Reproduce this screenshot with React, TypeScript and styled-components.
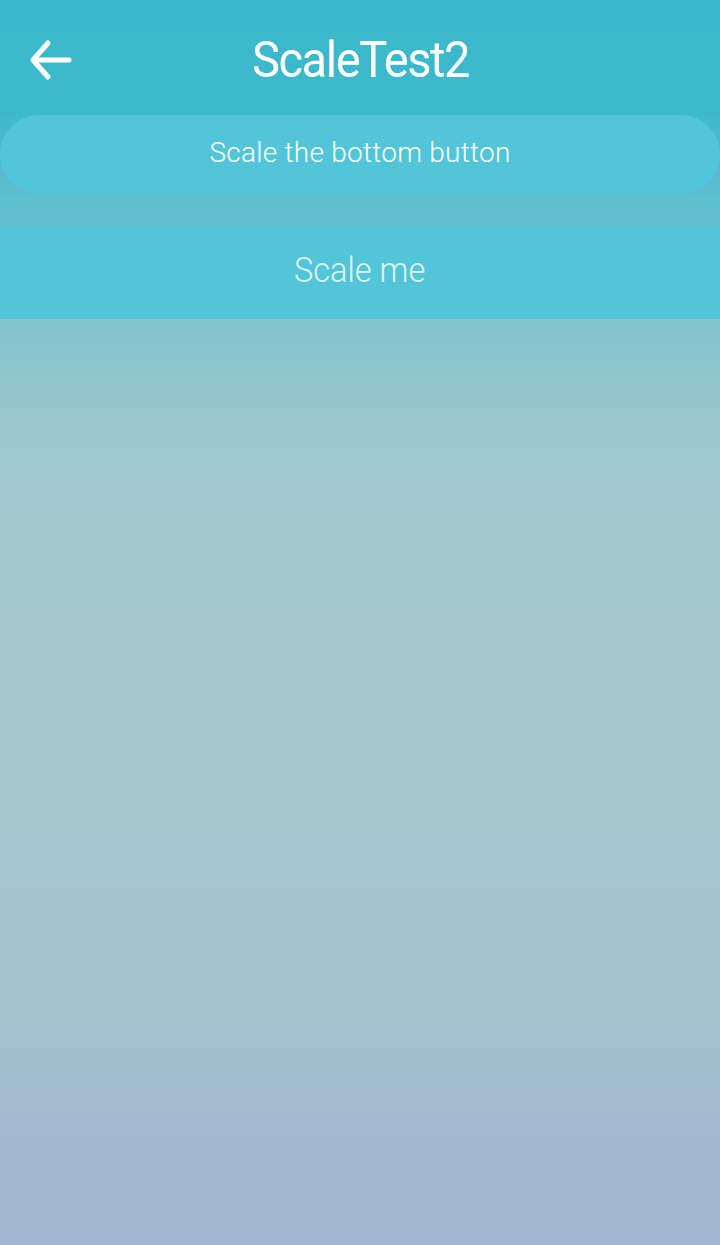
import * as React from "react";
import styled, { createGlobalStyle } from "styled-components";

const GlobalStyle = createGlobalStyle`
  html, body {
    margin: 0;
    padding: 0;
  }
  body {
    font-family: Roboto, "Open Sans", "Liberation Sans", sans-serif;
  }
`;

const Page = styled.div`
  display: flex;
  flex-direction: column;
  min-height: 1245px;
  width: 720px;
  background: linear-gradient(
    to bottom,
    #3cb8cc 0px,
    #3db9cc 112px,
    #5ebfcf 200px,
    #66c0cf 232px,
    #83c3cc 320px,
    #96c7cd 400px,
    #a2c9cf 500px,
    #a5c8ce 700px,
    #a3c3cd 1000px,
    #a3bdce 1090px,
    #a3b8cf 1150px,
    #a4b7d0 1245px
  );
`;

const Header = styled.header`
  display: grid;
  grid-template-columns: 1fr auto 1fr;
  align-items: center;
  height: 115px;
  padding-top: 4px;
  box-sizing: border-box;
`;

const BackButton = styled.button`
  justify-self: start;
  display: flex;
  align-items: center;
  justify-content: center;
  width: 44px;
  height: 44px;
  margin: 0 0 0 28px;
  padding: 0;
  border: none;
  background: transparent;
  cursor: pointer;
`;

const Title = styled.h1`
  margin: 0;
  color: #ffffff;
  font-family: Roboto, "Liberation Sans", sans-serif;
  font-size: 50px;
  font-weight: 400;
  letter-spacing: -1.5px;
  transform: scaleX(0.94);
`;

const Content = styled.main`
  display: flex;
  flex-direction: column;
  gap: 33px;
`;

const Button = styled.button<{ $pill?: boolean; $big?: boolean }>`
  display: flex;
  align-items: center;
  justify-content: center;
  width: 100%;
  height: ${(p) => (p.$big ? "93px" : "78px")};
  margin: 0;
  padding: 0 0 ${(p) => (p.$big ? "5px" : "3px")};
  border: none;
  border-radius: ${(p) => (p.$pill ? "39px" : "0")};
  background: #52c6d8;
  color: ${(p) => (p.$big ? "#e2f4f7" : "#ffffff")};
  font-family: Roboto, "Liberation Sans", sans-serif;
  font-size: ${(p) => (p.$big ? "35px" : "28px")};
  font-weight: 300;
  cursor: pointer;
`;

const Label = styled.span<{ $squeeze?: number; $spacing?: number }>`
  display: inline-block;
  letter-spacing: ${(p) => p.$spacing ?? 0}px;
  transform: scaleX(${(p) => p.$squeeze ?? 1});
`;

const ArrowIcon = () => (
  <svg width="44" height="44" viewBox="0 0 44 44" fill="none">
    <path
      d="M20 5 L5 22 L20 39 M5 22 H41"
      stroke="#ffffff"
      strokeWidth="5"
      strokeLinecap="round"
      strokeLinejoin="round"
    />
  </svg>
);

export default function App() {
  return (
    <Page>
      <GlobalStyle />
      <Header>
        <BackButton aria-label="Back">
          <ArrowIcon />
        </BackButton>
        <Title>ScaleTest2</Title>
        <div />
      </Header>
      <Content>
        <Button $pill>
          <Label $spacing={0.25}>Scale the bottom button</Label>
        </Button>
        <Button $big>
          <Label $squeeze={0.93}>Scale me</Label>
        </Button>
      </Content>
    </Page>
  );
}
